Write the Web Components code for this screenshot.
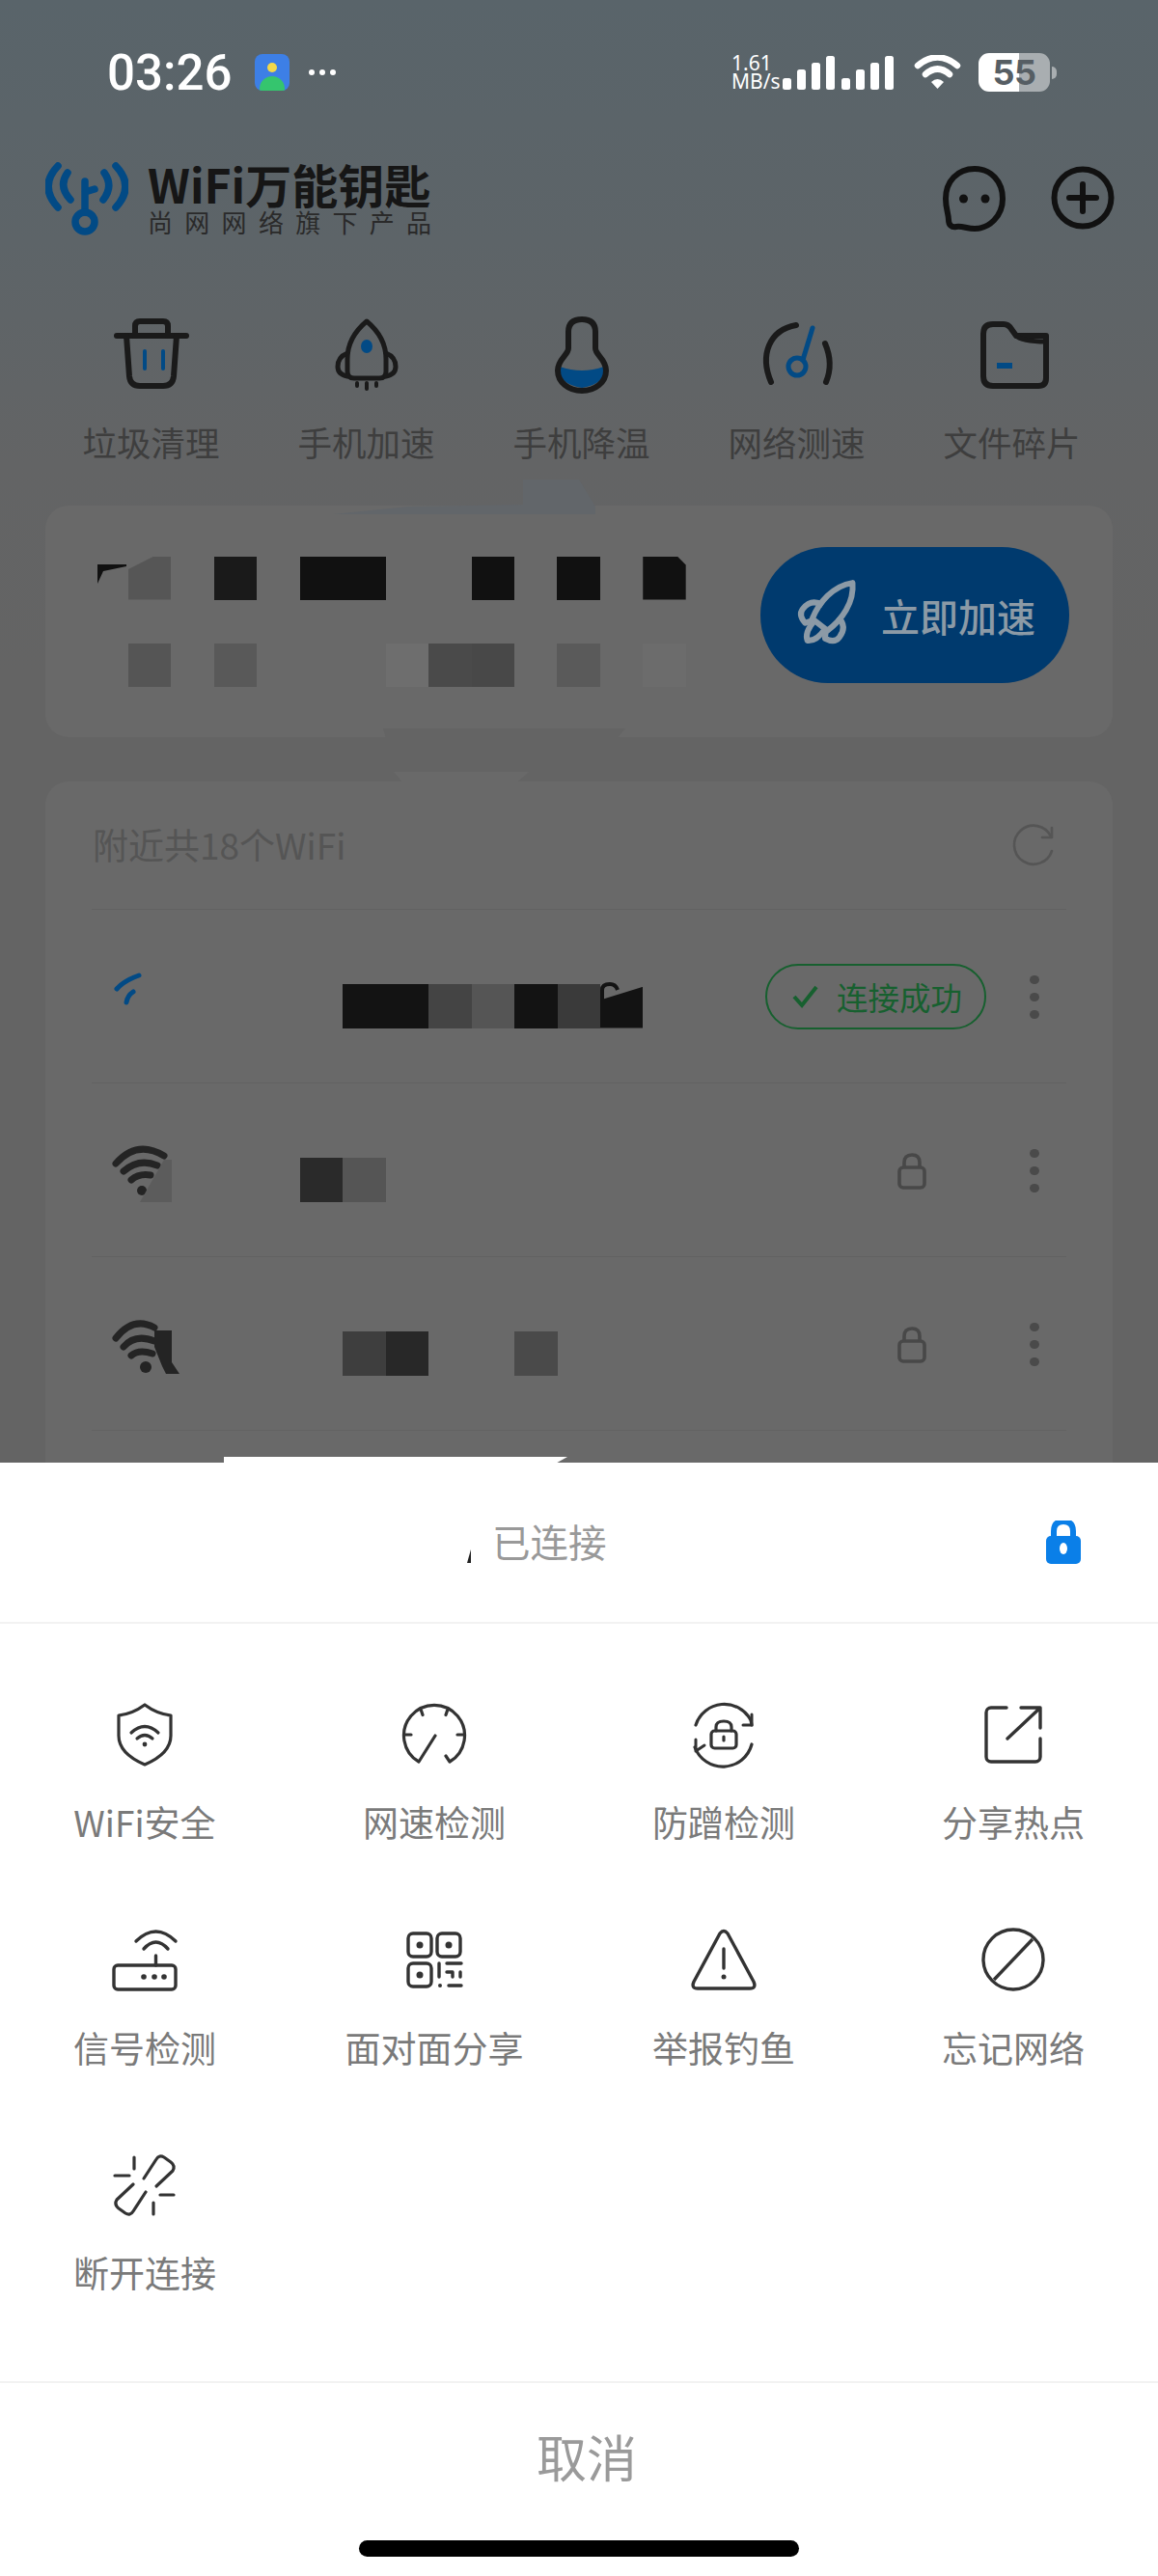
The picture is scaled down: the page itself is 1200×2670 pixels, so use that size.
<!DOCTYPE html>
<html lang="zh">
<head>
<meta charset="utf-8">
<title>WiFi万能钥匙</title>
<style>
  html, body { margin: 0; padding: 0; background: #fff; }
  body { width: 1200px; height: 2670px; overflow: hidden; font-family: "Noto Sans CJK SC", "Noto Sans", sans-serif; }
</style>
</head>
<body>
<wifi-screen>
  <status-bar slot="status"></status-bar>
  <app-header slot="header"></app-header>
  <tool-item slot="tools" icon="trash">垃圾清理</tool-item>
  <tool-item slot="tools" icon="rocket">手机加速</tool-item>
  <tool-item slot="tools" icon="gourd">手机降温</tool-item>
  <tool-item slot="tools" icon="meter">网络测速</tool-item>
  <tool-item slot="tools" icon="folder">文件碎片</tool-item>
  <boost-card slot="boost">立即加速</boost-card>
  <wifi-list slot="list" heading="附近共18个WiFi">
    <wifi-row icon="wifi-a" cells="-;-;-;#131313;#131313;#444;#555;#131313;#3a3a3a;#131313|polygon(0 37%,100% 7%,100% 100%,0 100%)" state="ok"></wifi-row>
    <wifi-row icon="wifi-b" cells="-;-;#2a2a2a;#555" state="lock"></wifi-row>
    <wifi-row icon="wifi-c" cells="-;-;-;#3e3e3e;#282828;-;-;#4a4a4a" state="lock"></wifi-row>
  </wifi-list>
  <action-sheet slot="sheet" status="已连接">
    <sheet-action icon="shield">WiFi安全</sheet-action>
    <sheet-action icon="speed">网速检测</sheet-action>
    <sheet-action icon="relock">防蹭检测</sheet-action>
    <sheet-action icon="share">分享热点</sheet-action>
    <sheet-action icon="router">信号检测</sheet-action>
    <sheet-action icon="qr">面对面分享</sheet-action>
    <sheet-action icon="warn">举报钓鱼</sheet-action>
    <sheet-action icon="ban">忘记网络</sheet-action>
    <sheet-action icon="unlink">断开连接</sheet-action>
  </action-sheet>
</wifi-screen>

<script>
const FONT = '"Noto Sans CJK SC", "Noto Sans", sans-serif';
const BLUE = '#024a85';
const INK = '#1a1a1a';

// icons are all drawn in the box they sit in, so viewBox = pixels
const ICONS = {
  trash: `<svg width="80" height="80" viewBox="-1 0 80 80" fill="none" stroke="${INK}" stroke-width="6" stroke-linecap="round" stroke-linejoin="round">
    <path d="M3 20H75"/><path d="M22 20V10Q22 5 27 5H51Q56 5 56 10V20"/>
    <path d="M13 20L16 62Q17 72 27 72H51Q61 72 62 62L65 20"/>
    <path d="M32 36V54M51 36V54" stroke="${BLUE}" stroke-width="4"/></svg>`,
  rocket: `<svg width="80" height="80" viewBox="0 0 80 80" fill="none" stroke="${INK}" stroke-width="5" stroke-linecap="round" stroke-linejoin="round">
    <path d="M40 5C52 15 60 27 60 44V57Q60 64 53 64H27Q20 64 20 57V44C20 27 28 15 40 5Z"/>
    <path d="M20 38Q10 42 10 52Q10 60 20 62M60 38Q70 42 70 52Q70 60 60 62"/>
    <path d="M30 69V72M40 69V75M50 69V72" stroke-width="4"/>
    <ellipse cx="40" cy="31" rx="6" ry="7" fill="${BLUE}" stroke="none"/></svg>`,
  gourd: `<svg width="80" height="80" viewBox="0 0 80 80" fill="none">
    <path d="M17 52Q40 60 63 52Q65 70 40 74Q15 70 17 52Z" fill="${BLUE}"/>
    <path d="M26 16Q26 3 40 3Q54 3 54 16V33C54 40 65 44 65 56C65 68 54 77 40 77C26 77 15 68 15 56C15 44 26 40 26 33Z" stroke="${INK}" stroke-width="6"/></svg>`,
  meter: `<svg width="80" height="80" viewBox="-3 0 80 80" fill="none" stroke-linecap="round">
    <path d="M10 68C-2 40 8 14 36 9" stroke="${INK}" stroke-width="6"/>
    <path d="M66 28C72 42 72 56 67 68" stroke="${INK}" stroke-width="6"/>
    <path d="M53 12L43 45" stroke="${BLUE}" stroke-width="5"/>
    <circle cx="37" cy="52" r="9" stroke="${BLUE}" stroke-width="5"/></svg>`,
  folder: `<svg width="80" height="80" viewBox="-3 0 80 80" fill="none" stroke="${INK}" stroke-width="6" stroke-linejoin="round">
    <path d="M7 18Q7 8 17 8H28Q33 8 36 13L41 20H72V64Q72 72 64 72H17Q7 72 7 62Z"/>
    <path d="M41 20Q47 26 72 26" stroke-width="5"/>
    <path d="M21 51H37" stroke="${BLUE}" stroke-width="6"/></svg>`,
  shield: `<svg width="70" height="70" viewBox="0 0 70 70" fill="none" stroke="#333" stroke-width="3.2" stroke-linecap="round" stroke-linejoin="round">
    <path d="M35 4C27 10 17 14 8 15V36C8 50 21 60 35 66C49 60 62 50 62 36V15C53 14 43 10 35 4Z"/>
    <path d="M21 33Q35 20 49 33M27 39Q35 32 43 39"/><circle cx="35" cy="45" r="2.4" fill="#333" stroke="none"/></svg>`,
  speed: `<svg width="70" height="70" viewBox="0 0 70 70" fill="none" stroke="#333" stroke-width="3.2" stroke-linecap="round" stroke-linejoin="round">
    <path d="M19 63A31.5 31.5 0 1 1 51 63L47 57M19 63L36 36"/>
    <path d="M4 35H11M59 35H66M21.500 10L23 14.500M48.500 10L47 14.500"/></svg>`,
  relock: `<svg width="70" height="70" viewBox="0 0 70 70" fill="none" stroke="#333" stroke-width="3.2" stroke-linecap="round" stroke-linejoin="round">
    <path d="M6 25A31 31 0 0 1 63 20L64 25M5 48A31 31 0 0 0 64 45"/>
    <path d="M64 14V25H55M6 40V52L15 46" stroke-width="3"/>
    <rect x="22" y="31" width="26" height="18" rx="3.500"/>
    <path d="M27 31V27Q27 21 35 21Q43 21 43 27V31M35 37V41"/></svg>`,
  share: `<svg width="70" height="70" viewBox="0 0 70 70" fill="none" stroke="#333" stroke-width="3.4" stroke-linecap="round" stroke-linejoin="round">
    <path d="M28 7H12A5 5 0 0 0 7 12V58A5 5 0 0 0 12 63H58A5 5 0 0 0 63 58V39"/>
    <path d="M29 39L62 8M43 7H63V28"/></svg>`,
  router: `<svg width="70" height="70" viewBox="0 0 70 70" fill="none" stroke="#333" stroke-width="3.4" stroke-linecap="round" stroke-linejoin="round">
    <rect x="3" y="40" width="64" height="25" rx="4"/><path d="M46.500 30V40"/>
    <path d="M26 15Q46.500 -5 67 15M34 23Q46.500 9 59 23"/>
    <g fill="#333" stroke="none"><circle cx="34" cy="52" r="2.800"/><circle cx="45" cy="52" r="2.800"/><circle cx="55" cy="52" r="2.800"/></g></svg>`,
  qr: `<svg width="70" height="70" viewBox="0 0 70 70" fill="none" stroke="#333" stroke-width="3.4" stroke-linecap="round" stroke-linejoin="round">
    <rect x="8" y="7" width="24" height="24" rx="5"/><rect x="38" y="7" width="24" height="24" rx="5"/><rect x="8" y="38" width="24" height="24" rx="5"/>
    <g fill="#333" stroke="none"><circle cx="20" cy="19" r="3.500"/><circle cx="50" cy="19" r="3.500"/><circle cx="20" cy="50" r="3.500"/><circle cx="41" cy="61" r="2"/></g>
    <path d="M40 38V52M48 38H63M48 47H54V52M62 47V52M50 61H63"/></svg>`,
  warn: `<svg width="70" height="70" viewBox="0 0 70 70" fill="none" stroke="#333" stroke-width="3.4" stroke-linecap="round" stroke-linejoin="round">
    <path d="M31 7Q35 2 39 7L66 57Q69 64 62 64H8Q1 64 4 57Z"/><path d="M35 23V43"/>
    <circle cx="35" cy="52" r="2.500" fill="#333" stroke="none"/></svg>`,
  ban: `<svg width="70" height="70" viewBox="0 0 70 70" fill="none" stroke="#333" stroke-width="3.400">
    <circle cx="35" cy="34" r="31"/><path d="M15 55L55 13"/></svg>`,
  unlink: `<svg width="70" height="70" viewBox="0 0 70 70" fill="none" stroke="#333" stroke-width="3.200" stroke-linecap="round" stroke-linejoin="round">
    <path d="M34 28L47 8Q50 3 55 6L62 11Q67 15 64 20L47 36"/>
    <path d="M36 42L23 62Q20 67 15 64L8 59Q3 55 6 50L23 34"/>
    <path d="M24 6V18M4 25H19M51 45H65M44 53V65"/></svg>`,
  'wifi-a': `<svg width="70" height="70" viewBox="0 0 70 70" fill="none" stroke="${BLUE}" stroke-width="5" stroke-linecap="round">
    <path d="M3 29Q11 20 26 15M20 32Q14 36 13 43"/></svg>`,
  'wifi-b': `<svg width="70" height="70" viewBox="0 0 70 70" fill="none" stroke="#242424" stroke-width="7" stroke-linecap="round">
    <path d="M2 30Q24 5 52 22M10 38Q26 24 45 32M18 47Q26 40 38 42"/><circle cx="29" cy="58" r="5" fill="#242424" stroke="none"/>
    <path d="M27 70L52 26H60V70Z" fill="#5c5c5c" stroke="none"/></svg>`,
  'wifi-c': `<svg width="70" height="70" viewBox="0 0 70 70" fill="none" stroke="#242424" stroke-width="7" stroke-linecap="round">
    <path d="M2 31Q20 8 42 20M10 40Q22 26 42 34M18 49Q26 42 40 47"/><circle cx="33" cy="61" r="6" fill="#242424" stroke="none"/>
    <path d="M42 23H60V56L68 68H54L50 60L42 40Z" fill="#242424" stroke="none"/></svg>`,
  lock: `<svg width="32" height="38" viewBox="0 0 32 38" fill="none" stroke="#484848" stroke-width="3.600">
    <rect x="3" y="15" width="26" height="21" rx="4"/><path d="M8 15V10Q8 2 16 2Q24 2 24 10V15"/></svg>`,
  refresh: `<svg width="44" height="44" viewBox="0 0 44 44" fill="none" stroke="#555" stroke-width="2.600" stroke-linecap="round" stroke-linejoin="round">
    <path d="M40 12A20 20 0 1 0 41 27"/><path d="M31 13H41V3"/></svg>`,
  bolt: `<svg width="72" height="72" viewBox="-36 -36 72 72" fill="none" stroke="#8c9aa6" stroke-width="6" stroke-linejoin="round">
    <g transform="rotate(38)"><path d="M0 -43C14 -28 15 -6 10 12H-10C-15 -6 -14 -28 0 -43Z"/>
    <path d="M-10 -6Q-24 -4 -24 10Q-24 18 -13 20L-8 12M10 -6Q24 -4 24 10Q24 18 13 20L8 12"/>
    <path d="M-7 12Q-8 28 0 33Q8 28 7 12"/></g></svg>`,
  chat: `<svg width="70" height="70" viewBox="0 0 70 70" fill="none" stroke="#111" stroke-width="6">
    <path d="M37 5C54 5 66 18 66 36C66 54 52 67 37 67C29 67 24 64 18 65C13 66 10 63 10 58C10 52 7 46 7 36C7 18 19 5 37 5Z"/>
    <g fill="#111" stroke="none"><circle cx="25.500" cy="36" r="4.500"/><circle cx="48" cy="36" r="4.500"/></g></svg>`,
  plus: `<svg width="70" height="70" viewBox="0 0 70 70" fill="none" stroke="#111" stroke-width="6" stroke-linecap="round">
    <circle cx="35" cy="35" r="29.500"/><path d="M21 35H49M35 21V49"/></svg>`,
};

class AppIcon extends HTMLElement {
  constructor() {
    super();
    this.attachShadow({mode: 'open'});
  }
  connectedCallback() {
    this.shadowRoot.innerHTML = `<style>:host{display:block;line-height:0}svg{display:block;overflow:visible}</style>${ICONS[this.getAttribute('name')]}`;
  }
}

// a row of pixelated blocks left over from the redaction in the original screenshot
class MosaicStrip extends HTMLElement {
  constructor() {
    super();
    this.attachShadow({mode: 'open'});
  }
  connectedCallback() {
    const h = this.getAttribute('cell-height') || 45;
    const cells = this.getAttribute('cells').split(';').map(c => {
      const [color, clip] = c.split('|');
      if (color === '-') return '<i></i>';
      return `<i style="background:${color};${clip ? `clip-path:${clip}` : ''}"></i>`;
    }).join('');
    this.shadowRoot.innerHTML = `<style>
      :host { display: grid; grid-auto-flow: column; grid-auto-columns: 44.45px; height: ${h}px; }
      i { display: block; height: 100%; }
    </style>${cells}`;
  }
}

class StatusBar extends HTMLElement {
  constructor() {
    super();
    this.attachShadow({mode: 'open'});
    this.shadowRoot.innerHTML = `<style>
      :host { display: flex; align-items: center; height: 150px; padding: 0 0 0 111px; box-sizing: border-box; color: #fff; font-family: Roboto, "Noto Sans", sans-serif; }
      .time { font-size: 51px; font-weight: 500; width: 153px; line-height: 1; }
      .app { position: relative; width: 36px; height: 38px; border-radius: 8px; overflow: hidden; background: #3d7fe6; }
      .app i { position: absolute; left: 13px; top: 9px; width: 10px; height: 10px; border-radius: 50%; background: #f2d84a; }
      .app b { position: absolute; left: 5px; right: 5px; bottom: 0; height: 15px; border-radius: 13px 13px 0 0; background: #35c56e; }
      .more { display: flex; gap: 5px; margin-left: 20px; }
      .more i { width: 6px; height: 6px; border-radius: 50%; background: #fff; }
      .speed { margin-left: 410px; width: 53px; font-size: 21px; line-height: 19px; font-family: "Noto Sans", sans-serif; }
      .bars { display: flex; align-items: flex-end; gap: 6px; height: 35px; }
      .bars i { width: 9px; border-radius: 2.500px; background: #fff; }
      .bars i:nth-child(5) { margin-left: 1px; }
      .wifi { margin-left: 21px; }
      .batt { margin-left: 18px; width: 74px; height: 40px; border-radius: 11px; background: linear-gradient(90deg, #fff 0 42px, #a9aeb1 42px); color: #565e64; font: 700 36px/40px Inter, sans-serif; text-align: center; letter-spacing: -.5px; }
      .tip { width: 5px; height: 13px; margin-left: 2px; background: #a9aeb1; border-radius: 0 5px 5px 0; }
    </style>
    <div class="time">03:26</div>
    <div class="app"><i></i><b></b></div>
    <div class="more"><i></i><i></i><i></i></div>
    <div class="speed">1.61<br>MB/s</div>
    <div class="bars">
      <i style="height:12px"></i><i style="height:21px"></i><i style="height:28px"></i><i style="height:35px"></i>
      <i style="height:12px"></i><i style="height:21px"></i><i style="height:28px"></i><i style="height:35px"></i>
    </div>
    <svg class="wifi" width="49" height="36" viewBox="0 0 49 36" fill="none" stroke="#fff" stroke-width="6.500" stroke-linecap="round">
      <path d="M4 11Q24.500 -6 45 11M12 20Q24.500 9 37 20"/><path d="M18 28Q24.500 22 31 28L24.500 35Z" fill="#fff" stroke="none"/>
    </svg>
    <div class="batt">55</div>
    <div class="tip"></div>`;
  }
}

class AppHeader extends HTMLElement {
  constructor() {
    super();
    this.attachShadow({mode: 'open'});
    this.shadowRoot.innerHTML = `<style>
      :host { display: flex; align-items: center; height: 110px; padding: 0 43px 0 47px; color: #161616; font-family: ${FONT}; }
      .logo { width: 86px; height: 80px; margin-right: 20px; }
      h1 { margin: 0; font-size: 48px; line-height: 50px; font-weight: 700; }
      p { margin: 0; font-size: 26px; line-height: 30px; letter-spacing: 12.300px; white-space: nowrap; color: #2a2a2a; }
      .end { margin-left: auto; display: flex; gap: 44px; }
    </style>
    <svg class="logo" viewBox="47 165 86 80" fill="none" stroke="${BLUE}" stroke-width="7.500" stroke-linecap="round">
      <path d="M60 172Q40 193 60 215M70 179Q60 193 73 207M120 172Q140 193 120 215M108 179Q118 193 107 207"/>
      <path d="M88 188V220M88 199L98 196"/><circle cx="88" cy="230" r="10"/>
    </svg>
    <div><h1>WiFi万能钥匙</h1><p>尚网网络旗下产品</p></div>
    <div class="end"><app-icon name="chat"></app-icon><app-icon name="plus"></app-icon></div>`;
  }
}

class ToolItem extends HTMLElement {
  constructor() {
    super();
    this.attachShadow({mode: 'open'});
  }
  connectedCallback() {
    this.shadowRoot.innerHTML = `<style>
      :host { display: flex; flex-direction: column; align-items: center; gap: 25px; padding-bottom: 2px; color: #3e3e3e; font-family: ${FONT}; font-size: 35.500px; line-height: 50px; }
    </style>
    <app-icon name="${this.getAttribute('icon')}"></app-icon>
    <div><slot></slot></div>`;
  }
}

class BoostCard extends HTMLElement {
  constructor() {
    super();
    this.attachShadow({mode: 'open'});
    this.shadowRoot.innerHTML = `<style>
      :host { display: flex; position: relative; align-items: center; justify-content: space-between; height: 240px; box-sizing: border-box; margin: 0 47px; padding: 0 45px 0 86px; background: #696969; border-radius: 24px; }
      .text { display: flex; flex-direction: column; gap: 45px; }
      button { display: flex; align-items: center; gap: 20px; flex: none; width: 320px; height: 141px; margin-top: -13px; padding: 0 0 0 33px; box-sizing: border-box; border: 0; border-radius: 70px; background: #003a6e; color: #8c9aa6; font: 500 40px/1 ${FONT}; }
      .wedge { position: absolute; left: 54px; top: 61px; width: 30px; height: 20px; background: #111; clip-path: polygon(0 0,100% 0,100% 10%,20% 35%,0 100%); }
      /* leftovers of the redaction around the card edge */
      .smear-top { position: absolute; left: 298px; top: -27px; width: 272px; height: 36px; background: #62666a; clip-path: polygon(197px 0,255px 0,272px 28px,272px 36px,0 36px,80px 28px,197px 26px); }
      .smear-low { position: absolute; left: 350px; top: 231px; width: 251px; height: 9px; background: #646464; clip-path: polygon(0 0,100% 0,97% 100%,1% 100%); }
    </style>
    <div class="smear-top"></div>
    <div class="smear-low"></div>
    <div class="wedge"></div>
    <div class="text">
      <mosaic-strip cells="#565656|polygon(60% 0,100% 0,100% 100%,0 100%,0 30%);-;#1a1a1a;-;#111;#111;-;-;#111;-;#111;-;#111|polygon(0 0,80% 0,100% 20%,100% 100%,0 100%)"></mosaic-strip>
      <mosaic-strip cells="#555;-;#595959;-;-;-;#6e6e6e;#4a4a4a;#484848;-;#5a5a5a;-;#6c6c6c"></mosaic-strip>
    </div>
    <button><app-icon name="bolt"></app-icon><slot></slot></button>`;
  }
}

class WifiList extends HTMLElement {
  constructor() {
    super();
    this.attachShadow({mode: 'open'});
  }
  connectedCallback() {
    this.shadowRoot.innerHTML = `<style>
      :host { display: block; position: relative; margin: 46px 47px 0; padding: 0 48px 60px; background: #696969; border-radius: 24px 24px 0 0; font-family: ${FONT}; }
      header { display: flex; align-items: center; justify-content: space-between; height: 133px; box-sizing: border-box; padding: 0 12px 2px 1px; font-size: 37px; color: #555; border-bottom: 1px solid #626262; }
      header app-icon { margin-top: 4px; }
      .smear { position: absolute; left: 361px; top: -10px; width: 140px; height: 10px; background: #696969; clip-path: polygon(0 0,100% 0,92% 100%,6% 100%); }
    </style>
    <div class="smear"></div>
    <header><span>${this.getAttribute('heading')}</span><app-icon name="refresh"></app-icon></header>
    <slot></slot>`;
  }
}

class WifiRow extends HTMLElement {
  constructor() {
    super();
    this.attachShadow({mode: 'open'});
  }
  connectedCallback() {
    const ok = this.getAttribute('state') === 'ok';
    const end = ok
      ? `<div class="badge"><svg width="28" height="26" viewBox="0 0 28 26" fill="none" stroke="#17602f" stroke-width="4"><path d="M2 13L10 22L25 3"/></svg>连接成功</div>`
      : `<app-icon class="lock" name="lock"></app-icon>`;
    const hook = ok
      ? `<svg class="hook" width="20" height="20" viewBox="0 0 20 20" fill="none" stroke="#131313" stroke-width="4"><path d="M2 20V8Q2 2 10 2Q16 2 18 8"/></svg>`
      : '';
    this.shadowRoot.innerHTML = `<style>
      :host { display: flex; position: relative; align-items: center; height: 180px; box-sizing: border-box; padding: 0 28px 0 23px; border-bottom: 1px solid #626262; font-family: ${FONT}; }
      app-icon.wifi { margin-top: -3px; }
      mosaic-strip { margin: 20px 0 0 34px; }
      .hook { position: absolute; left: 527px; top: 75px; }
      .end { margin-left: auto; display: flex; align-items: center; }
      .badge { display: flex; align-items: center; gap: 18px; width: 229px; height: 68px; box-sizing: border-box; padding-left: 26px; margin-right: 45px; border: 2px solid #17602f; border-radius: 34px; color: #17602f; font-size: 32.500px; white-space: nowrap; }
      .lock { margin: 2px 106px 0 0; }
      .dots { display: flex; flex-direction: column; gap: 9px; margin-top: 2px; }
      .dots i { width: 10px; height: 9px; border-radius: 50%; background: #4a4a4a; }
    </style>
    <app-icon class="wifi" name="${this.getAttribute('icon')}"></app-icon>
    <mosaic-strip cell-height="46" cells="${this.getAttribute('cells')}"></mosaic-strip>
    ${hook}
    <div class="end">${end}<div class="dots"><i></i><i></i><i></i></div></div>`;
  }
}

class SheetAction extends HTMLElement {
  constructor() {
    super();
    this.attachShadow({mode: 'open'});
  }
  connectedCallback() {
    this.shadowRoot.innerHTML = `<style>
      :host { display: flex; flex-direction: column; align-items: center; gap: 30px; color: #7a7a7a; font-size: 37px; line-height: 50px; white-space: nowrap; }
    </style>
    <app-icon name="${this.getAttribute('icon')}"></app-icon>
    <div><slot></slot></div>`;
  }
}

class ActionSheet extends HTMLElement {
  constructor() {
    super();
    this.attachShadow({mode: 'open'});
  }
  connectedCallback() {
    this.shadowRoot.innerHTML = `<style>
      :host { display: flex; flex-direction: column; position: relative; height: 1154px; background: #fff; font-family: ${FONT}; }
      .sliver { position: absolute; left: 232px; top: -6px; width: 356px; height: 6px; background: #fff; clip-path: polygon(0 0,100% 0,97% 100%,0 100%); }
      .tick { position: absolute; left: 484px; top: 90px; width: 4px; height: 14px; background: #222; clip-path: polygon(100% 0,100% 100%,0 100%); }
      .head { display: flex; align-items: center; height: 167px; box-sizing: border-box; padding: 0 80px 4px 510px; font-size: 39.500px; color: #999; border-bottom: 2px solid #f2f2f2; }
      .head svg { margin: 4px 0 0 auto; }
      .grid { flex: 1; display: grid; grid-template-columns: repeat(4, 300px); grid-auto-rows: 153px; row-gap: 80.500px; padding-top: 80px; box-sizing: border-box; align-content: start; }
      .cancel { display: flex; align-items: center; justify-content: center; height: 158px; box-sizing: border-box; padding: 0 0 6px 16px; border-top: 2px solid #f2f2f2; font-size: 52px; color: #9a9a9a; }
      .home { width: 456px; height: 17px; margin: 7px auto 20px; background: #000; border-radius: 9px; }
    </style>
    <div class="sliver"></div>
    <div class="tick"></div>
    <div class="head">${this.getAttribute('status')}
      <svg width="36" height="46" viewBox="0 0 36 46"><path d="M8 20V11Q8 1 18 1Q28 1 28 11V20" fill="none" stroke="#0a7fe8" stroke-width="6"/><rect y="16" width="36" height="29" rx="5" fill="#0a7fe8"/><ellipse cx="18" cy="29" rx="4" ry="6" fill="#fff"/></svg>
    </div>
    <div class="grid"><slot></slot></div>
    <div class="cancel">取消</div>
    <div class="home"></div>`;
  }
}

class WifiScreen extends HTMLElement {
  constructor() {
    super();
    this.attachShadow({mode: 'open'});
    this.shadowRoot.innerHTML = `<style>
      :host { display: flex; flex-direction: column; height: 2670px; }
      .dim { height: 1516px; overflow: hidden; background: linear-gradient(#59646a 0, #5d6468 250px, #636465 480px, #646464 700px); }
      .tools { display: grid; grid-template-columns: repeat(5, 223px); padding: 68px 0 39px 45px; }
    </style>
    <div class="dim">
      <slot name="status"></slot>
      <slot name="header"></slot>
      <div class="tools"><slot name="tools"></slot></div>
      <slot name="boost"></slot>
      <slot name="list"></slot>
    </div>
    <slot name="sheet"></slot>`;
  }
}

customElements.define('app-icon', AppIcon);
customElements.define('mosaic-strip', MosaicStrip);
customElements.define('status-bar', StatusBar);
customElements.define('app-header', AppHeader);
customElements.define('tool-item', ToolItem);
customElements.define('boost-card', BoostCard);
customElements.define('wifi-list', WifiList);
customElements.define('wifi-row', WifiRow);
customElements.define('sheet-action', SheetAction);
customElements.define('action-sheet', ActionSheet);
customElements.define('wifi-screen', WifiScreen);
</script>
</body>
</html>
